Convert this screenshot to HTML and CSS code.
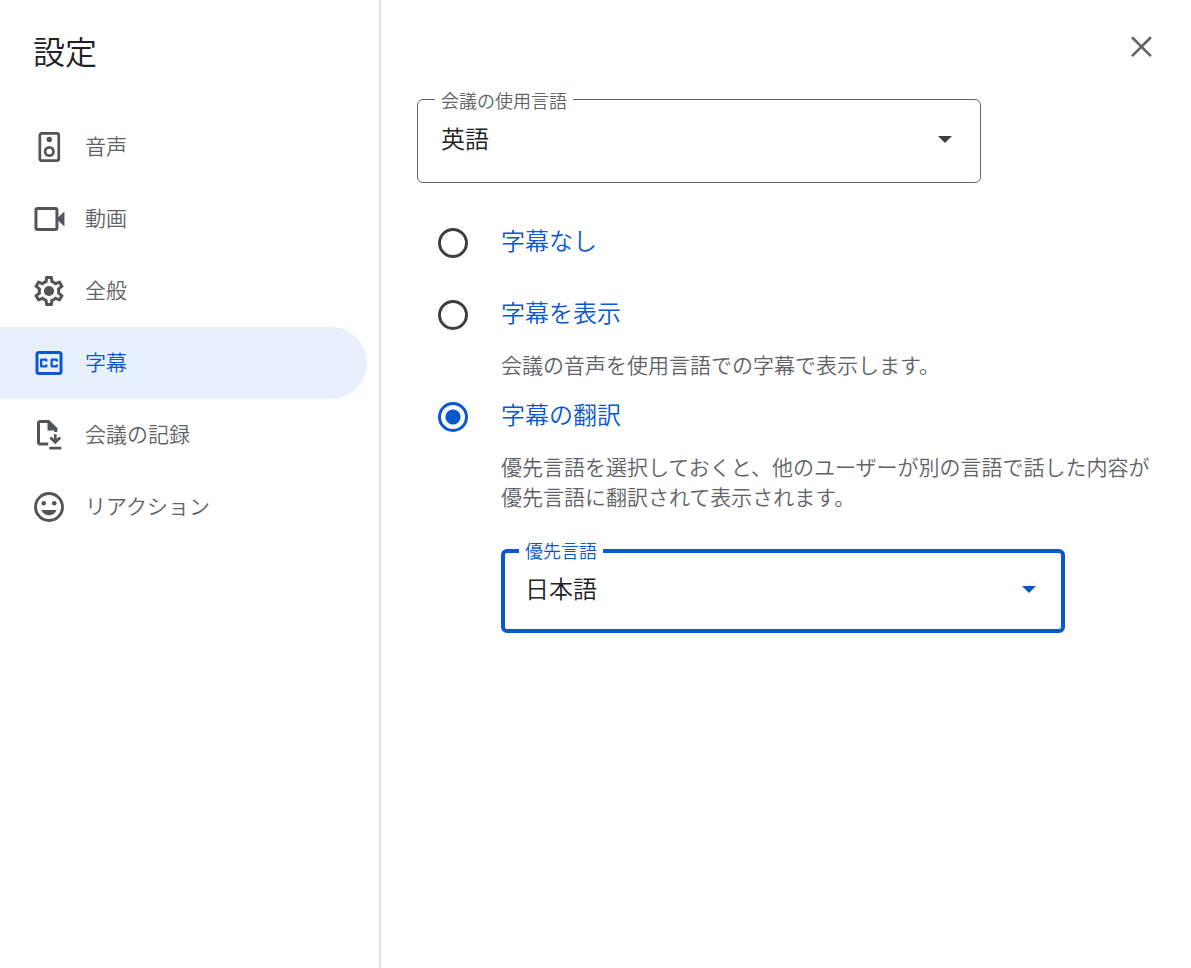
FILE: index.html
```html
<!DOCTYPE html>
<html lang="ja">
<head>
    <meta charset="UTF-8">
    <meta name="viewport" content="width=device-width, initial-scale=1.0">
    <title>設定</title>
    <link rel="stylesheet" href="styles.css">
</head>
<body>
    <div class="settings">
        <aside class="sidebar">
            <h1>設定</h1>
            <nav>
                <a href="#audio" class="nav-item">
                    <svg class="icon" viewBox="0 0 24 24" aria-hidden="true"><rect x="5.9" y="2.9" width="12.6" height="18.2" rx="1.2" fill="none" stroke="currentColor" stroke-width="1.8"/><circle cx="12.200" cy="7" r="1.8"/><circle cx="12.200" cy="15" r="2.8" fill="none" stroke="currentColor" stroke-width="1.8"/></svg>
                    <span>音声</span>
                </a>
                <a href="#video" class="nav-item">
                    <svg class="icon" viewBox="0 0 24 24" aria-hidden="true"><rect x="3.300" y="5" width="14" height="14" rx="1" fill="none" stroke="currentColor" stroke-width="2"/><path d="M18 11l4.300-4v10L18 13z"/></svg>
                    <span>動画</span>
                </a>
                <a href="#general" class="nav-item">
                    <svg class="icon" viewBox="0 0 24 24" aria-hidden="true"><path d="M19.43 12.98c.04-.32.07-.64.07-.98 0-.34-.03-.66-.07-.98l2.11-1.65c.19-.15.24-.42.12-.64l-2-3.46c-.09-.16-.26-.25-.44-.25-.06 0-.12.01-.17.03l-2.49 1c-.52-.4-1.08-.73-1.69-.98l-.38-2.65C14.46 2.18 14.25 2 14 2h-4c-.25 0-.46.18-.49.42l-.38 2.65c-.61.25-1.17.59-1.69.98l-2.49-1c-.06-.02-.12-.03-.18-.03-.17 0-.34.09-.43.25l-2 3.46c-.13.22-.07.49.12.64l2.11 1.65c-.04.32-.07.65-.07.98 0 .33.03.66.07.98l-2.11 1.65c-.19.15-.24.42-.12.64l2 3.46c.09.16.26.25.44.25.06 0 .12-.01.17-.03l2.49-1c.52.4 1.08.73 1.69.98l.38 2.65c.03.24.24.42.49.42h4c.25 0 .46-.18.49-.42l.38-2.65c.61-.25 1.17-.59 1.69-.98l2.49 1c.06.02.12.03.18.03.17 0 .34-.09.43-.25l2-3.46c.12-.22.07-.49-.12-.64l-2.11-1.65zm-1.98-1.71c.04.31.05.52.05.73 0 .21-.02.43-.05.73l-.14 1.13.89.7 1.08.84-.7 1.21-1.27-.51-1.04-.42-.9.68c-.43.32-.84.56-1.25.73l-1.06.43-.16 1.13-.2 1.35h-1.4l-.19-1.35-.16-1.13-1.06-.43c-.43-.18-.83-.41-1.23-.71l-.91-.7-1.06.43-1.27.51-.7-1.21 1.08-.84.89-.7-.14-1.13c-.03-.31-.05-.54-.05-.74s.02-.43.05-.73l.14-1.13-.89-.7-1.08-.84.7-1.21 1.27.51 1.04.42.9-.68c.43-.32.84-.56 1.25-.73l1.06-.43.16-1.13.2-1.35h1.39l.19 1.35.16 1.13 1.06.43c.43.18.83.41 1.23.71l.91.7 1.06-.43 1.27-.51.7 1.21-1.07.85-.89.7.14 1.13z"/><circle cx="12" cy="12" r="3.4"/></svg>
                    <span>全般</span>
                </a>
                <a href="#captions" class="nav-item active" aria-current="page">
                    <svg class="icon" viewBox="0 0 24 24" aria-hidden="true"><path d="M19 4H5c-1.11 0-2 .9-2 2v12c0 1.1.89 2 2 2h14c1.1 0 2-.9 2-2V6c0-1.1-.9-2-2-2zm0 14H5V6h14v12zM7 15h3c.55 0 1-.45 1-1v-1H9.5v.5h-2v-3h2v.5H11v-1c0-.55-.45-1-1-1H7c-.55 0-1 .45-1 1v4c0 .55.45 1 1 1zm7 0h3c.55 0 1-.45 1-1v-1h-1.5v.5h-2v-3h2v.5H18v-1c0-.55-.45-1-1-1h-3c-.55 0-1 .45-1 1v4c0 .55.45 1 1 1z"/></svg>
                    <span>字幕</span>
                </a>
                <a href="#records" class="nav-item">
                    <svg class="icon" viewBox="0 0 24 24" aria-hidden="true"><path d="M11.500 17v2H6c-1.100 0-2-.9-2-2V4c0-1.100.9-2 2-2h6l5.500 5.500V10h-2V9L11 4H6v13z"/><path d="M11 3h2l4.500 4.500V9H11z"/><path d="M15.300 11.500h1.800v3.200l1.700-1.700 1.300 1.300-3.900 3.900-3.900-3.900 1.300-1.300 1.700 1.700zM12.200 19.800h8v1.900h-8z"/></svg>
                    <span>会議の記録</span>
                </a>
                <a href="#reactions" class="nav-item">
                    <svg class="icon" viewBox="0 0 24 24" aria-hidden="true"><circle cx="12" cy="12" r="9" fill="none" stroke="currentColor" stroke-width="1.9"/><circle cx="8.5" cy="9.5" r="1.5"/><circle cx="15.5" cy="9.5" r="1.5"/><path d="M12 17.5c2.33 0 4.31-1.46 5.11-3.5H6.89c.8 2.04 2.78 3.5 5.11 3.5z"/></svg>
                    <span>リアクション</span>
                </a>
            </nav>
        </aside>

        <main class="content">
            <div class="toolbar">
                <button type="button" class="close" aria-label="閉じる">
                    <svg class="icon" viewBox="0 0 24 24" aria-hidden="true"><path d="M6 5.500l12.600 12.600M18.600 5.500L6 18.100" fill="none" stroke="currentColor" stroke-width="1.7"/></svg>
                </button>
            </div>

            <div class="field">
                <label for="meetingLanguage">会議の使用言語</label>
                <select id="meetingLanguage">
                    <option selected>英語</option>
                    <option>日本語</option>
                </select>
                <svg class="arrow" viewBox="0 0 14 7" aria-hidden="true"><path d="M0 0h14L7 7z"/></svg>
            </div>

            <form class="options">
                <div class="option">
                    <input type="radio" name="captions" id="captionsOff">
                    <label for="captionsOff">字幕なし</label>
                </div>
                <div class="option">
                    <input type="radio" name="captions" id="captionsOn">
                    <label for="captionsOn">字幕を表示</label>
                </div>
                <p class="description">会議の音声を使用言語での字幕で表示します。</p>
                <div class="option">
                    <input type="radio" name="captions" id="captionsTranslated" checked>
                    <label for="captionsTranslated">字幕の翻訳</label>
                </div>
                <p class="description">優先言語を選択しておくと、他のユーザーが別の言語で話した内容が優先言語に翻訳されて表示されます。</p>
                <div class="field focused">
                    <label for="preferredLanguage">優先言語</label>
                    <select id="preferredLanguage">
                        <option>英語</option>
                        <option selected>日本語</option>
                    </select>
                    <svg class="arrow" viewBox="0 0 14 7" aria-hidden="true"><path d="M0 0h14L7 7z"/></svg>
                </div>
            </form>
        </main>
    </div>
</body>
</html>
```
FILE: styles.css
```css
* {
    box-sizing: border-box;
}
body {
    margin: 0;
    font-family: "Noto Sans CJK JP", sans-serif;
    font-weight: 350;
    background-color: #fff;
    color: #202124;
}
.settings {
    display: grid;
    grid-template-columns: 381px 1fr;
    min-height: 100vh;
}
.sidebar {
    border-right: 2px solid #e0e0e0;
    padding-right: 12px;
}
h1 {
    margin: 0;
    padding: 26px 33px 37px;
    font-size: 32px;
    font-weight: 350;
    line-height: 48px;
}
.nav-item {
    display: flex;
    align-items: center;
    gap: 18px;
    height: 72px;
    padding-left: 31px;
    border-radius: 0 36px 36px 0;
    font-size: 21px;
    line-height: 30px;
    color: #5f6368;
    text-decoration: none;
}
.nav-item span {
    padding-bottom: 4px;
}
.nav-item.active {
    background-color: #e8f0fe;
    color: #0b57d0;
}
.icon {
    display: block;
    width: 36px;
    height: 36px;
    fill: currentColor;
}
.nav-item .icon {
    color: #50555a;
}
.nav-item.active .icon {
    color: #0b57d0;
}
.content {
    padding: 29px 32px 36px 36px;
}
.toolbar {
    display: flex;
    justify-content: flex-end;
    margin-bottom: 34px;
}
.close {
    padding: 0;
    border: none;
    background: none;
    color: #5f6368;
    cursor: pointer;
}
.field {
    position: relative;
    max-width: 564px;
}
.field label {
    position: absolute;
    top: -12px;
    left: 18px;
    padding: 0 6px;
    background-color: #fff;
    font-size: 18px;
    line-height: 26px;
    color: #5f6368;
}
.field select {
    display: block;
    appearance: none;
    width: 100%;
    height: 84px;
    padding: 0 60px 8px 23px;
    border: 1px solid #5f6368;
    border-radius: 6px;
    background-color: #fff;
    font: inherit;
    font-size: 24px;
    color: #202124;
    outline: none;
}
.field .arrow {
    position: absolute;
    top: 37px;
    right: 29px;
    width: 14px;
    height: 7px;
    fill: #3c4043;
    pointer-events: none;
}
.field.focused {
    margin: 36px 0 0 84px;
}
.field.focused label {
    color: #0b57d0;
}
.field.focused select {
    padding-left: 20px;
    border: 4px solid #0b57d0;
}
.field.focused .arrow {
    fill: #0b57d0;
}
.options {
    margin-top: 24px;
}
.option {
    display: flex;
    align-items: center;
    height: 72px;
    padding-left: 21px;
}
.option input {
    appearance: none;
    width: 30px;
    height: 30px;
    margin: 0 33px 0 0;
    border: 3px solid #3c4043;
    border-radius: 50%;
}
.option input:checked {
    border-color: #0b57d0;
    background: radial-gradient(circle, #0b57d0 7px, transparent 8px);
}
.option label {
    padding-bottom: 6px;
    font-size: 24px;
    line-height: 36px;
    color: #0b57d0;
}
.description {
    margin: -2px 0 0 84px;
    padding-bottom: 2px;
    font-size: 21px;
    line-height: 30px;
    color: #5f6368;
}
```
